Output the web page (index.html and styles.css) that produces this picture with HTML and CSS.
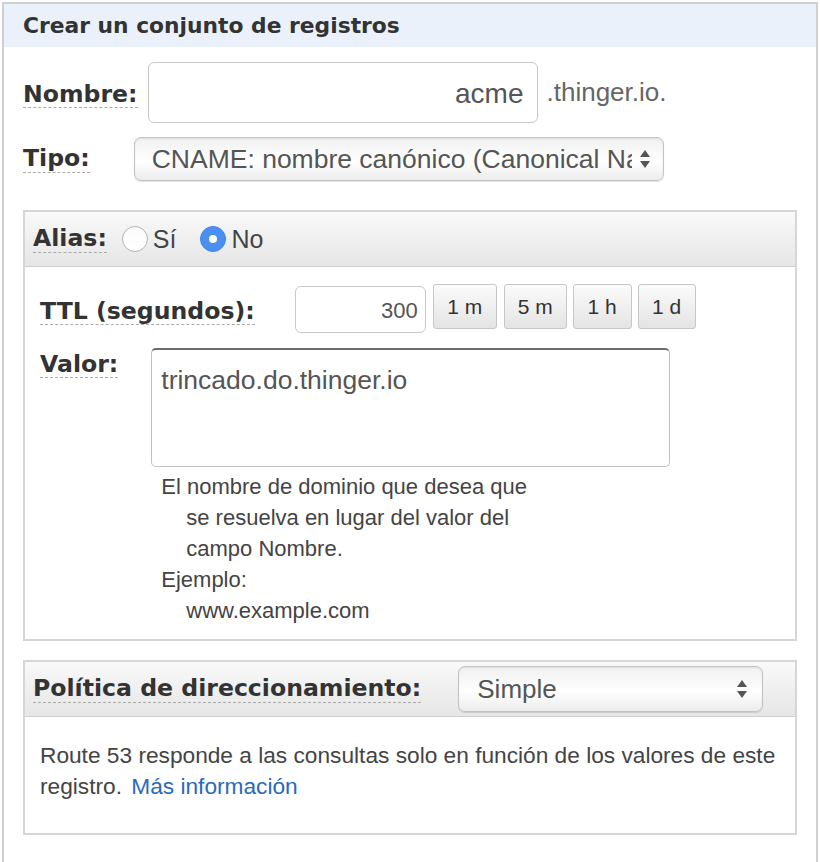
FILE: index.html
```html
<!DOCTYPE html>
<html lang="es">
<head>
<meta charset="utf-8">
<link rel="stylesheet" href="styles.css">
</head>
<body>
<div class="outer">
  <div class="title">Crear un conjunto de registros</div>
  <div class="content">
    <div class="row row-name">
      <span class="lbl lbl-name">Nombre:</span>
      <div class="input input-name">acme</div>
      <span class="suffix">.thinger.io.</span>
    </div>
    <div class="row row-type">
      <span class="lbl lbl-type">Tipo:</span>
      <div class="select select-type">
        <span class="select-text">CNAME: nombre canónico (Canonical Name)</span>
        <svg class="arrows" width="12" height="22" viewBox="0 0 12 22"><path d="M6 2 L11 9 H1 Z" fill="#555"/><path d="M6 20 L11 13 H1 Z" fill="#555"/></svg>
      </div>
    </div>

    <div class="panel panel-alias">
      <div class="panel-head">
        <span class="lbl lbl-alias">Alias:</span>
        <span class="radio"></span><span class="radio-text">Sí</span>
        <span class="radio radio-on"><span class="dot"></span></span><span class="radio-text">No</span>
      </div>
      <div class="panel-body alias-body">
        <div class="row row-ttl">
          <span class="lbl lbl-ttl">TTL (segundos):</span>
          <div class="input input-ttl">300</div>
          <div class="btns">
            <span class="btn b1">1 m</span>
            <span class="btn b2">5 m</span>
            <span class="btn b3">1 h</span>
            <span class="btn b4">1 d</span>
          </div>
        </div>
        <div class="row row-val">
          <span class="lbl lbl-val">Valor:</span>
          <div class="val-col">
            <div class="textarea">trincado.do.thinger.io</div>
            <div class="help">
              <div>El nombre de dominio que desea que</div>
              <div class="ind">se resuelva en lugar del valor del</div>
              <div class="ind">campo Nombre.</div>
              <div>Ejemplo:</div>
              <div class="ind">www.example.com</div>
            </div>
          </div>
        </div>
      </div>
    </div>

    <div class="panel panel-policy">
      <div class="panel-head head-policy">
        <span class="lbl lbl-policy">Política de direccionamiento:</span>
        <div class="select select-policy">
          <span class="select-text">Simple</span>
          <svg class="arrows" width="12" height="22" viewBox="0 0 12 22"><path d="M6 2 L11 9 H1 Z" fill="#555"/><path d="M6 20 L11 13 H1 Z" fill="#555"/></svg>
        </div>
      </div>
      <div class="panel-body policy-body">
        Route 53 responde a las consultas solo en función de los valores de este registro. <a class="link" href="#">Más información</a>
      </div>
    </div>
  </div>
</div>
</body>
</html>
```
FILE: styles.css
```css
html, body {
  margin: 0;
  padding: 0;
  background: #fff;
}
body {
  font-family: "Liberation Sans", Arial, sans-serif;
  color: #444;
}
.outer {
  margin: 2px 2px 0 2px;
  border: 2px solid #d0d0d0;
  border-bottom: none;
  min-height: 880px;
  box-sizing: border-box;
}
.title {
  background: #eaf1fb;
  height: 43px;
  box-sizing: border-box;
  padding: 7px 0 0 19px;
  font-family: "DejaVu Sans", Verdana, sans-serif;
  font-weight: bold;
  font-size: 21.8px;
  line-height: 30px;
  color: #333;
}
.content {
  padding: 0 19px;
}
.row {
  display: flex;
  align-items: center;
}
.lbl {
  font-family: "DejaVu Sans", Verdana, sans-serif;
  font-weight: bold;
  font-size: 23.6px;
  color: #333;
  border-bottom: 1px dashed #aaa;
  line-height: 1.12;
  white-space: nowrap;
}
.row-name {
  margin-top: 15px;
}
.lbl-name {
  margin-right: 10px;
  margin-top: 4px;
}
.input {
  box-sizing: border-box;
  border: 1px solid #c8c8c8;
  border-radius: 6px;
  background: #fff;
  text-align: right;
  color: #555;
}
.input-name {
  width: 390px;
  height: 61px;
  font-size: 28px;
  line-height: 61px;
  padding-right: 13px;
}
.suffix {
  margin-left: 9px;
  font-size: 26px;
  color: #666;
}
.row-type {
  margin-top: 14px;
}
.lbl-type {
  margin-right: 44px;
}
.select {
  box-sizing: border-box;
  display: flex;
  align-items: center;
  justify-content: space-between;
  border: 1px solid #c4c4c4;
  border-radius: 7px;
  background: linear-gradient(#f0f0f0, #ffffff 55%, #ececec);
  box-shadow: inset 0 1px 2px rgba(0,0,0,0.08), 0 1px 1px rgba(0,0,0,0.12);
  color: #555;
  overflow: hidden;
}
.select-type {
  width: 530px;
  height: 44px;
  padding: 0 12px 0 17px;
  font-size: 26.5px;
}
.select-text {
  white-space: nowrap;
  overflow: hidden;
  flex: 1;
  min-width: 0;
}
.arrows {
  flex: none;
  margin-left: 7px;
}
.panel {
  border: 2px solid #d6d6d6;
}
.panel-alias {
  margin-top: 29px;
}
.panel-head {
  display: flex;
  align-items: center;
  height: 55px;
  box-sizing: border-box;
  padding-left: 8px;
  background: linear-gradient(#f9f9f9, #e6e6e6);
  border-bottom: 1px solid #cfcfcf;
}
.lbl-alias {
  margin-right: 15px;
}
.radio {
  box-sizing: border-box;
  flex: none;
  width: 26px;
  height: 26px;
  border-radius: 50%;
  border: 1px solid #b4b4b4;
  background: linear-gradient(#fbfbfb, #ffffff);
  display: inline-flex;
  align-items: center;
  justify-content: center;
}
.radio-on {
  background: #4b8ff2;
  border-color: #3f83e6;
  margin-left: 24px;
}
.dot {
  width: 8px;
  height: 8px;
  border-radius: 50%;
  background: #fff;
}
.radio-text {
  font-size: 25px;
  color: #444;
  margin-left: 5px;
}
.panel-body {
  padding: 0 15px;
}
.alias-body {
  padding-bottom: 3px;
}
.row-ttl {
  margin-top: 19px;
}
.lbl-ttl {
  margin-right: 40px;
  margin-top: 4px;
}
.input-ttl {
  width: 131px;
  height: 47px;
  font-size: 22px;
  line-height: 47px;
  padding-right: 7px;
}
.btns {
  display: flex;
  gap: 7px;
  margin-left: 7px;
  align-self: flex-start;
  margin-top: -2px;
}
.btn {
  box-sizing: border-box;
  height: 45px;
  line-height: 43px;
  border: 1px solid #c6c6c6;
  border-radius: 3px;
  background: linear-gradient(#fbfbfb, #e4e4e4);
  font-size: 21px;
  color: #333;
  text-align: center;
}
.b1 { width: 64px; }
.b2 { width: 63px; }
.b3 { width: 59px; margin-left: -1px; }
.b4 { width: 58px; margin-left: -1px; }
.row-val {
  margin-top: 15px;
  align-items: flex-start;
}
.lbl-val {
  margin-right: 33px;
  margin-top: 3px;
}
.textarea {
  box-sizing: border-box;
  width: 519px;
  height: 119px;
  border: 1px solid #c2c2c2;
  border-top: 2px solid #6d6d6d;
  border-radius: 5px;
  padding: 14px 0 0 9px;
  font-size: 26.5px;
  line-height: 32px;
  color: #555;
}
.help {
  padding-left: 10px;
  padding-top: 4px;
  font-size: 22px;
  line-height: 31px;
  color: #444;
  padding-bottom: 10px;
}
.ind {
  padding-left: 25px;
}
.panel-policy {
  margin-top: 19px;
}
.lbl-policy {
  margin-right: 37px;
}
.select-policy {
  width: 305px;
  height: 46px;
  padding: 0 14px 0 18px;
  font-size: 26px;
}
.policy-body {
  padding: 23px 10px 31px 15px;
  font-size: 22.7px;
  line-height: 31px;
  color: #444;
}
.link {
  color: #2a6ab8;
  text-decoration: none;
  margin-left: 3px;
}
```
